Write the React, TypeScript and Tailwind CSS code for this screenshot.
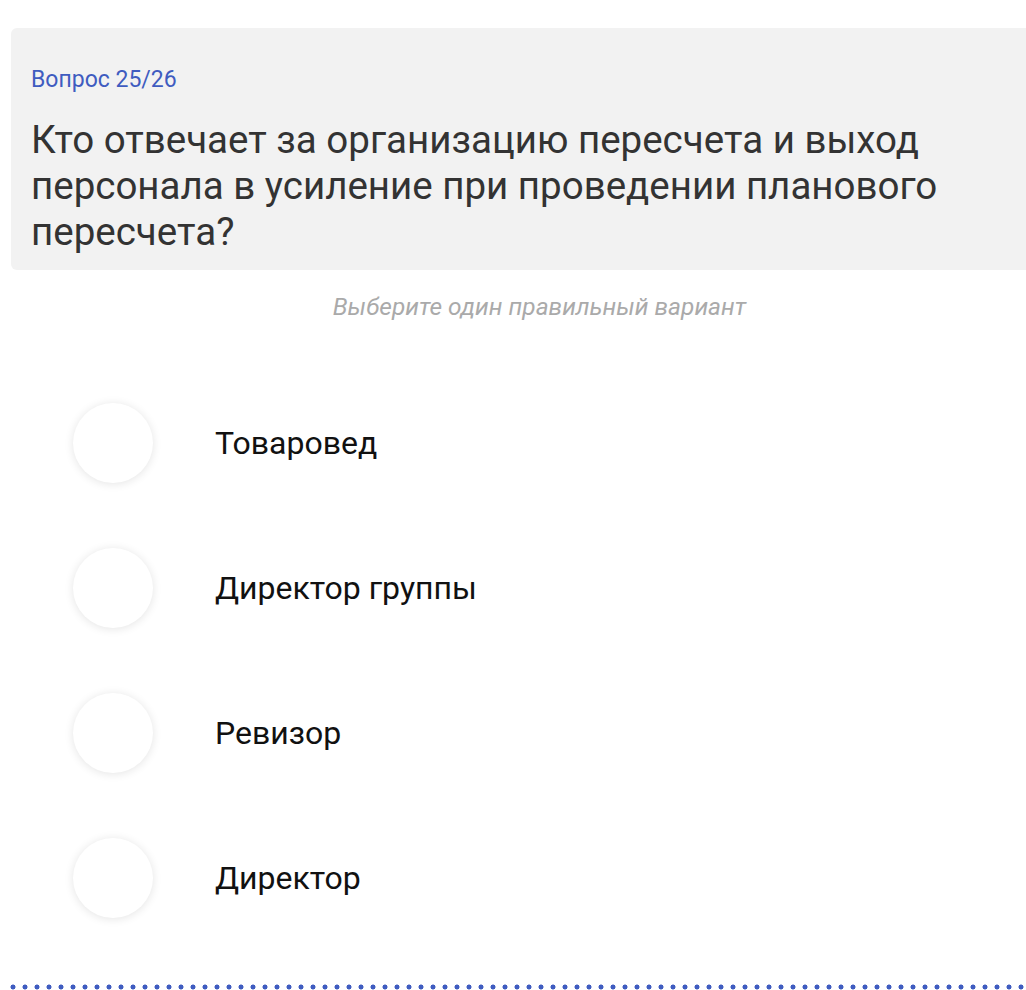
const options = ["Товаровед", "Директор группы", "Ревизор", "Директор"];

function Option({ label }: { label: string }) {
  return (
    <div className="flex h-[145px] items-center pl-[62px]">
      <div className="h-[80px] w-[80px] shrink-0 rounded-full bg-white shadow-[0_1px_10px_rgba(0,0,0,0.11)]" />
      <span className="ml-[62px] text-[32px] leading-[38px] text-[#111]">{label}</span>
    </div>
  );
}

export default function App() {
  return (
    <div className="relative h-[990px] w-[1026px] overflow-hidden bg-white font-['Roboto',sans-serif]">
      <div className="ml-[11px] w-[1057px] pt-[28px]">
        {/* question card */}
        <div className="rounded-l-[6px] bg-[#f2f2f2] px-[20px] pb-[15px] pt-[39px]">
          <div className="text-[23px] leading-[26px] text-[#3f5cc0]">Вопрос 25/26</div>
          <h1 className="mt-[24px] w-[990px] text-[38.5px] leading-[46px] text-[#333]">
            Кто отвечает за организацию пересчета и выход персонала в усиление при проведении планового
            пересчета?
          </h1>
        </div>

        <p className="mt-[23px] text-center text-[24.5px] leading-[28px] italic text-[#aaa]">
          Выберите один правильный вариант
        </p>

        <div className="mt-[49px]">
          {options.map((o) => (
            <Option key={o} label={o} />
          ))}
        </div>
      </div>

      {/* dotted separator */}
      <div className="absolute left-[7px] right-0 top-[984px] h-[6px] bg-[radial-gradient(circle,#3f5cc0_2.2px,transparent_2.8px)] bg-[length:12px_6px]" />
    </div>
  );
}
